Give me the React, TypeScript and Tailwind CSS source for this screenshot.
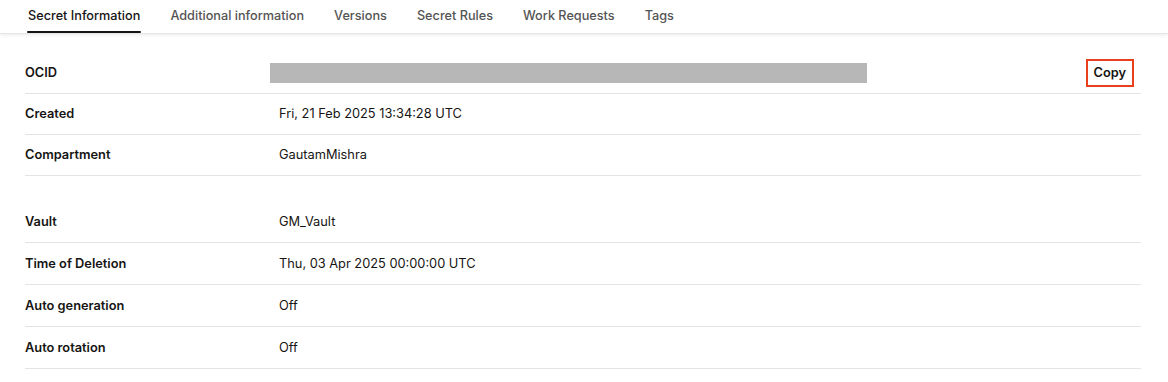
const tabs = [
  "Secret Information",
  "Additional information",
  "Versions",
  "Secret Rules",
  "Work Requests",
  "Tags",
];

const groupOne = [
  { label: "Created", value: "Fri, 21 Feb 2025 13:34:28 UTC" },
  { label: "Compartment", value: "GautamMishra" },
];

const groupTwo = [
  { label: "Vault", value: "GM_Vault" },
  { label: "Time of Deletion", value: "Thu, 03 Apr 2025 00:00:00 UTC" },
  { label: "Auto generation", value: "Off" },
  { label: "Auto rotation", value: "Off" },
];

const Row = ({ label, value, tall }: { label: string; value: string; tall?: boolean }) => (
  <div className={`flex items-center border-b border-[#e4e4e4] ${tall ? "h-[42px]" : "h-[41px]"}`}>
    <div className="w-[254px] text-[12.8px] font-semibold text-[#161513]">{label}</div>
    <div className="text-[12.8px] text-[#161513]">{value}</div>
  </div>
);

export default function App() {
  return (
    <div
      className="w-[1168px] h-[382px] bg-white overflow-hidden"
      style={{ fontFamily: "Inter, 'Liberation Sans', Arial, sans-serif" }}
    >
      <div className="flex h-[34px] items-stretch border-b border-[#e6e6e6] shadow-[0_2px_3px_rgba(0,0,0,0.06)] pl-[27px] gap-[28px]">
        {tabs.map((tab, i) => (
          <div
            key={tab}
            className={`relative flex items-center pb-[2px] text-[12.7px] font-medium ${
              i === 0 ? "text-[#161513]" : "text-[#545454]"
            }`}
          >
            <span className="px-[1px]">{tab}</span>
            {i === 0 && (
              <span className="absolute left-0 right-0 bottom-[0px] h-[2px] rounded-full bg-[#161513]" />
            )}
          </div>
        ))}
      </div>

      <div className="px-[25px] pr-[27px] pt-[19px]">
        <div className="flex items-center h-[41px] border-b border-[#e4e4e4]">
          <div className="w-[245px] text-[12.8px] font-semibold text-[#161513]">OCID</div>
          <div className="w-[597px] h-[20px] bg-[#b7b7b7]" />
          <div className="flex-1 flex justify-end pr-[7px]">
            <button className="h-[28px] px-[6px] border-2 border-[#e8401c] text-[12.8px] font-semibold text-[#161513]">
              Copy
            </button>
          </div>
        </div>
        {groupOne.map((r) => (
          <Row key={r.label} {...r} />
        ))}
        <div className="h-[25px]" />
        {groupTwo.map((r) => (
          <Row key={r.label} {...r} tall />
        ))}
      </div>
    </div>
  );
}
